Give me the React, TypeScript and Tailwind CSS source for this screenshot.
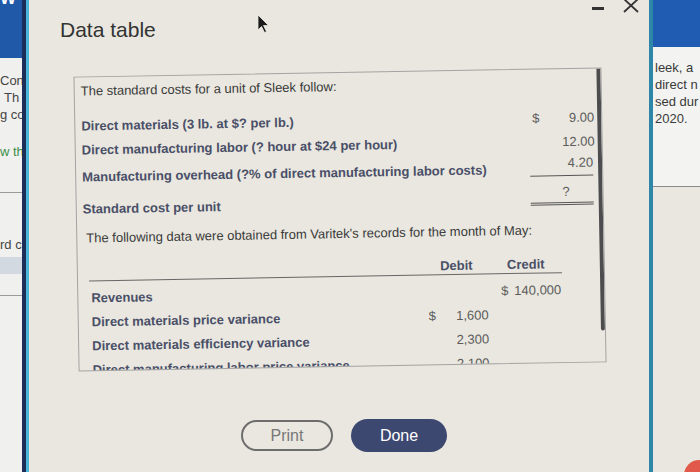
import React from "react";

const label = "font-bold text-[13px] leading-[16px] text-[#4a4f68] whitespace-nowrap";
const num = "text-[13px] leading-[16px] text-[#5c5c5c] whitespace-nowrap";

function LeftStrip() {
  return (
    <div className="w-[22px] shrink-0 flex flex-col overflow-hidden bg-[#f0f0ee]">
      <div className="h-[58px] bg-[#2159a9] overflow-hidden">
        <div className="-mt-[11px] text-white font-bold text-[17px] leading-[20px]">W</div>
      </div>
      <div className="flex flex-col text-[13px] leading-[17px] text-[#444] whitespace-nowrap">
        <div className="mt-[14px]">Cont</div>
        <div className="-ml-[3px]">, Th</div>
        <div>g co</div>
        <div className="mt-[20px] text-[#3c8f4a]">w th</div>
        <div className="mt-[32px] border-t border-[#9a9a9a]" />
        <div className="mt-[43px]">rd co</div>
        <div className="mt-[4px] h-[17px] bg-[#d3d9e1]" />
        <div className="mt-[21px] border-t border-[#9a9a9a]" />
      </div>
    </div>
  );
}

function RightStrip() {
  return (
    <div className="flex-1 flex flex-col overflow-hidden relative">
      <div className="h-[47px] bg-[#1f5cb2]" />
      <div className="h-[140px] bg-[#f3f3f1] border-b border-[#8a8a8a] pl-[2px] pt-[12px] text-[13px] leading-[17px] text-[#3a3a3a] whitespace-nowrap">
        <div>leek, a</div>
        <div>direct n</div>
        <div>sed dur</div>
        <div>2020.</div>
      </div>
      <div className="flex-1 bg-[#e9e7df]" />
      <div className="absolute right-[-14px] bottom-[-18px] w-[30px] h-[30px] rounded-full bg-[#e0594a]" />
    </div>
  );
}

function Row1({ text, val, dollar, h }: { text: string; val: string; dollar?: boolean; h: string }) {
  return (
    <div className={`flex items-center ${h}`}>
      <div className={`flex-1 ${label}`}>{text}</div>
      <div className="w-[65px] mr-[7px] flex justify-between">
        <span className={`${num} pl-[3px]`}>{dollar ? "$" : ""}</span>
        <span className={num}>{val}</span>
      </div>
    </div>
  );
}

function Row2({ text, debit, credit, dd, cd }: { text: string; debit?: string; credit?: string; dd?: boolean; cd?: boolean }) {
  return (
    <div className="flex items-center h-[24px]">
      <div className={`w-[334px] pl-[2px] ${label}`}>{text}</div>
      <div className="w-[67px] pl-[5px] pr-[2px] flex justify-between">
        <span className={num}>{dd ? "$" : ""}</span>
        <span className={num}>{debit ?? ""}</span>
      </div>
      <div className="w-[72px] pl-[11px] pr-[1px] flex justify-between">
        <span className={num}>{cd ? "$" : ""}</span>
        <span className={num}>{credit ?? ""}</span>
      </div>
    </div>
  );
}

function DataBox() {
  return (
    <div className="relative ml-[47px] mt-[30px] w-[528px] h-[295px] border border-[#a3a3a3] overflow-hidden -rotate-1">
      <div className="flex flex-col pl-[6px]">
        <div className="pt-[6px] text-[13px] leading-[16px] text-[#3a3a3a] whitespace-nowrap">
          The standard costs for a unit of Sleek follow:
        </div>
        <div className="mt-[14px]">
          <Row1 text="Direct materials (3 lb. at $? per lb.)" val="9.00" dollar h="h-[25px]" />
          <Row1 text="Direct manufacturing labor (? hour at $24 per hour)" val="12.00" h="h-[24px]" />
          <div className="flex items-start h-[22px]">
            <div className={`flex-1 pt-[7px] ${label}`}>Manufacturing overhead (?% of direct manufacturing labor costs)</div>
            <div className="w-[63px] mr-[9px] h-[22px] pt-[1px] border-b border-[#555] flex justify-end">
              <span className={num}>4.20</span>
            </div>
          </div>
          <div className="flex items-start h-[33px]">
            <div className={`flex-1 pt-[17px] ${label}`}>Standard cost per unit</div>
            <div className="w-[63px] mr-[9px] h-[29px] pt-[8px] border-b-[3px] border-double border-[#555] flex justify-center pl-[8px]">
              <span className={num}>?</span>
            </div>
          </div>
        </div>
        <div className="mt-[13px] pl-[3px] text-[13px] leading-[16px] text-[#3a3a3a] whitespace-nowrap">
          The following data were obtained from Varitek's records for the month of May:
        </div>
        <div className="ml-[5px] w-[473px]">
          <div className="mt-[11px] h-[24px] flex items-end border-b border-[#666]">
            <div className="w-[334px]" />
            <div className={`w-[67px] text-center ${label}`}>Debit</div>
            <div className={`w-[72px] text-center ${label}`}>Credit</div>
          </div>
          <div className="mt-[5px]">
            <Row2 text="Revenues" credit="140,000" cd />
            <Row2 text="Direct materials price variance" debit="1,600" dd />
            <Row2 text="Direct materials efficiency variance" debit="2,300" />
            <Row2 text="Direct manufacturing labor price variance" debit="2,100" />
          </div>
        </div>
      </div>
      <div className="absolute right-0 top-0 w-[4px] h-[262px] bg-[#4d4d4f] rounded-b-[2px]" />
    </div>
  );
}

function Dialog() {
  return (
    <div className="w-[620px] shrink-0 relative flex flex-col bg-[#e9e7df]">
      <div className="pl-[31px] pt-[18px] text-[21px] leading-[24px] text-[#333]">Data table</div>
      <svg className="absolute left-[228px] top-[14px]" width="14" height="20" viewBox="0 0 14 20">
        <path d="M1 1 L1 16 L4.5 12.5 L7.5 18.5 L9.5 17.5 L6.5 11.5 L11.5 11.5 Z" fill="#1a1a1a" stroke="#e9e7df" strokeWidth="0.8" />
      </svg>
      <div className="absolute left-[563px] top-[7px] w-[12px] h-[3px] bg-[#333]" />
      <svg className="absolute left-[594px] top-[-2px]" width="16" height="16" viewBox="0 0 16 16">
        <path d="M1 1 L15 14 M15 1 L1 14" stroke="#333" strokeWidth="1.8" />
      </svg>
      <DataBox />
      <div className="mt-[52px] pl-[212px] flex items-center gap-[18px]">
        <button className="w-[92px] h-[31px] rounded-full border-2 border-[#6d6d6d] text-[16px] text-[#777] bg-transparent">
          Print
        </button>
        <button className="w-[96px] h-[33px] rounded-full bg-[#3d4871] text-[16px] text-white">
          Done
        </button>
      </div>
    </div>
  );
}

export default function App() {
  return (
    <div className="w-[700px] h-[472px] flex overflow-hidden bg-[#e9e7df] font-['Liberation_Sans',Arial,sans-serif]">
      <LeftStrip />
      <div className="w-[4px] shrink-0 bg-[#1d2e5b]" />
      <div className="w-[3px] shrink-0 bg-[#4cb6da]" />
      <Dialog />
      <div className="w-[4px] shrink-0 bg-[#2e86a8]" />
      <RightStrip />
    </div>
  );
}
